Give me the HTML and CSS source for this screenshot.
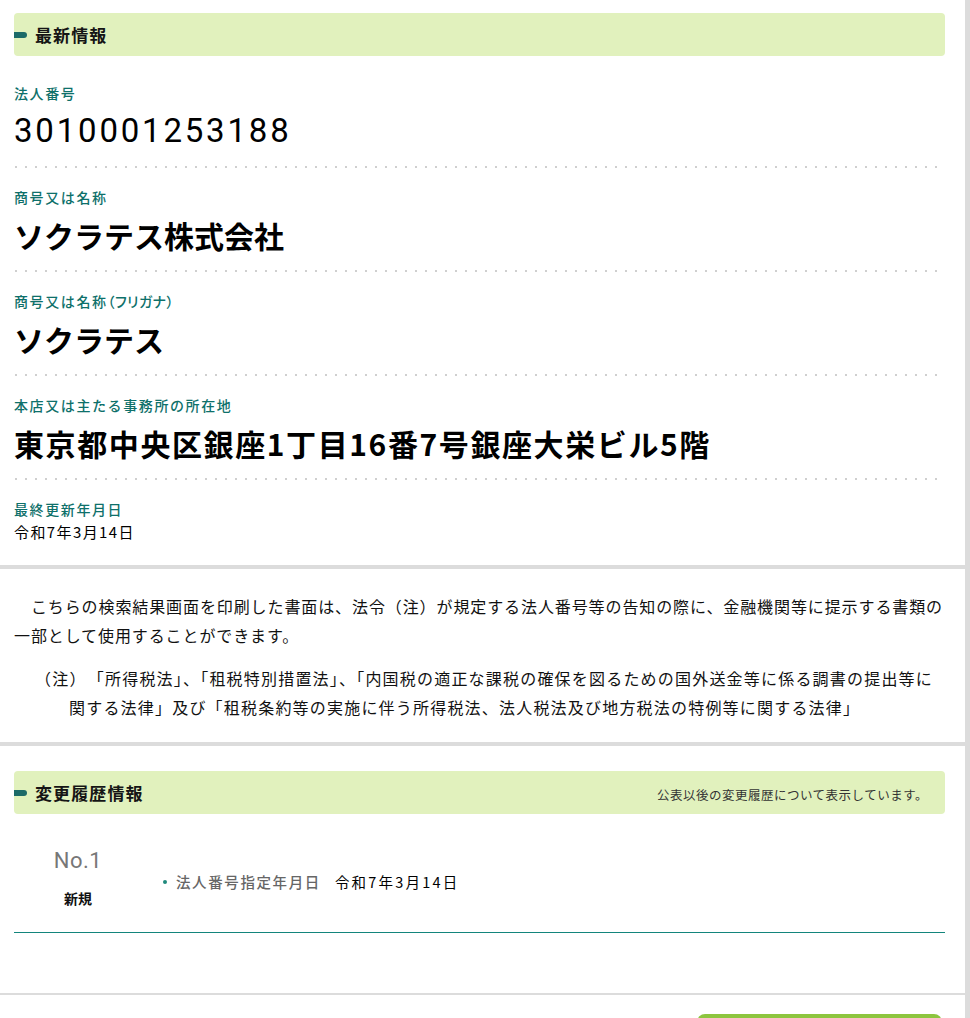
FILE: index.html
```html
<!DOCTYPE html>
<html lang="ja">
<head>
<meta charset="utf-8">
<title>法人番号</title>
<link rel="stylesheet" href="styles.css">
</head>
<body>
<div class="page">
  <section class="panel panel-latest">
    <h2 class="bar"><span class="bar-title">最新情報</span></h2>
    <dl class="items">
      <div class="item item-first">
        <dt class="label">法人番号</dt>
        <dd class="value value-number">3010001253188</dd>
      </div>
      <div class="item">
        <dt class="label">商号又は名称</dt>
        <dd class="value value-big">ソクラテス株式会社</dd>
      </div>
      <div class="item">
        <dt class="label">商号又は名称<span class="paren">（フリガナ）</span></dt>
        <dd class="value value-big">ソクラテス</dd>
      </div>
      <div class="item">
        <dt class="label">本店又は主たる事務所の所在地</dt>
        <dd class="value value-big value-address">東京都中央区銀座1丁目16番7号銀座大栄ビル5階</dd>
      </div>
      <div class="item item-last">
        <dt class="label">最終更新年月日</dt>
        <dd class="value value-small">令和7年3月14日</dd>
      </div>
    </dl>
  </section>

  <section class="panel panel-notice">
    <p class="notice">　こちらの検索結果画面を印刷した書面は、法令（注）が規定する法人番号等の告知の際に、金融機関等に提示する書類の<br>一部として使用することができます。</p>
    <p class="note">（注）　「所得税法」、「租税特別措置法」、「内国税の適正な課税の確保を図るための国外送金等に係る調書の提出等に<br>関する法律」及び「租税条約等の実施に伴う所得税法、法人税法及び地方税法の特例等に関する法律」</p>
  </section>

  <section class="panel panel-history">
    <h2 class="bar"><span class="bar-title">変更履歴情報</span><span class="bar-note">公表以後の変更履歴について表示しています。</span></h2>
    <div class="history-row">
      <div class="history-no">
        <div class="no">No.1</div>
        <div class="kind">新規</div>
      </div>
      <ul class="history-list">
        <li class="history-item"><span class="h-label">法人番号指定年月日</span><span class="h-value">令和7年3月14日</span></li>
      </ul>
    </div>
  </section>

  <section class="panel panel-actions">
    <div class="actions"><span class="btn"></span></div>
  </section>
</div>
</body>
</html>
```

FILE: styles.css
```css
html, body {
  margin: 0;
  padding: 0;
}
body {
  background: #dcdcdc;
  font-family: "Noto Sans CJK JP", "Noto Sans", sans-serif;
  color: #111;
  overflow: hidden;
}
.page {
  width: 965px;
  display: flex;
  flex-direction: column;
}
.panel {
  background: #fff;
  padding: 0 20px 0 14px;
}
.panel-latest {
  padding-top: 13px;
  margin-bottom: 4px;
}
.panel-notice {
  margin-bottom: 4px;
  padding-top: 23px;
  padding-bottom: 20px;
}
.panel-history {
  padding-top: 25px;
  padding-bottom: 60px;
  margin-bottom: 2px;
}
.panel-actions {
  padding-top: 19px;
  height: 40px;
}

/* header bar */
.bar {
  margin: 0;
  height: 43px;
  background: #e1f1bd;
  border-radius: 4px;
  display: flex;
  align-items: center;
  position: relative;
  padding-left: 21px;
  padding-right: 17px;
}
.bar::before {
  content: "";
  position: absolute;
  left: 0;
  top: 19px;
  width: 13px;
  height: 6px;
  background: #1c6b68;
  border-radius: 0 3px 3px 0;
}
.bar-title {
  font-size: 17px;
  font-weight: 700;
  color: #151515;
  letter-spacing: 1.1px;
}
.bar-note {
  margin-left: auto;
  font-size: 12.5px;
  font-weight: 400;
  color: #333;
  padding-top: 3px;
  letter-spacing: 0.5px;
}

/* items */
.items {
  margin: 0;
}
.item {
  padding: 21px 0 13px;
  background-image: linear-gradient(90deg, #cfcfcf 0 2px, transparent 2px 10px);
  background-size: 10px 2px;
  background-repeat: repeat-x;
  background-position: 1px bottom;
  border-bottom: 2px solid transparent;
  background-origin: border-box;
}
.item-first {
  padding-top: 29px;
}
.item-last {
  background: none;
  border-bottom: 0;
  padding-top: 21px;
  padding-bottom: 22px;
}
.label {
  font-size: 14px;
  line-height: 16px;
  font-weight: 500;
  color: #0e706a;
  letter-spacing: 1.6px;
}
.paren {
  letter-spacing: 0.4px;
  font-feature-settings: "palt";
}
.value {
  margin: 8px 0 0;
  line-height: 44px;
  color: #000;
}
.value-number {
  font-family: Roboto, "Noto Sans", sans-serif;
  font-size: 33px;
  letter-spacing: 2.8px;
  font-weight: 400;
}
.value-big {
  font-size: 30px;
  font-weight: 700;
}
.value-address {
  letter-spacing: 1.6px;
}
.value-small {
  margin-top: 4px;
  font-size: 15px;
  line-height: 22px;
  letter-spacing: 1.4px;
}

/* notice */
.notice, .note {
  margin: 0;
  font-size: 16px;
  line-height: 29px;
  letter-spacing: 1.2px;
  color: #111;
}
.notice {
  letter-spacing: 0.9px;
}
.note {
  margin-top: 14px;
  padding-left: 55px;
  text-indent: -34px;
}

/* history */
.history-row {
  display: flex;
  align-items: center;
  padding: 33px 0 24px;
  border-bottom: 1px solid #13857c;
}
.history-no {
  width: 128px;
  text-align: center;
}
.no {
  font-family: Roboto, "Noto Sans", sans-serif;
  font-size: 22px;
  line-height: 28px;
  color: #777;
  letter-spacing: 0.5px;
}
.kind {
  margin-top: 13px;
  font-size: 14px;
  line-height: 20px;
  font-weight: 700;
  color: #111;
}
.history-list {
  list-style: none;
  margin: 8px 0 0 21px;
  padding: 0;
}
.history-item {
  display: flex;
  align-items: center;
  font-size: 14.5px;
  line-height: 22px;
}
.history-item::before {
  content: "";
  width: 4px;
  height: 4px;
  border-radius: 50%;
  background: #1f8a7c;
  margin-right: 9px;
}
.h-label {
  color: #666;
  font-weight: 500;
  letter-spacing: 1.6px;
}
.h-value {
  margin-left: 14px;
  color: #000;
  letter-spacing: 2.2px;
}

/* actions */
.actions {
  display: flex;
  justify-content: flex-end;
  padding-right: 3px;
}
.btn {
  display: block;
  width: 245px;
  height: 44px;
  background: #8dc53f;
  border-radius: 8px;
}
```
